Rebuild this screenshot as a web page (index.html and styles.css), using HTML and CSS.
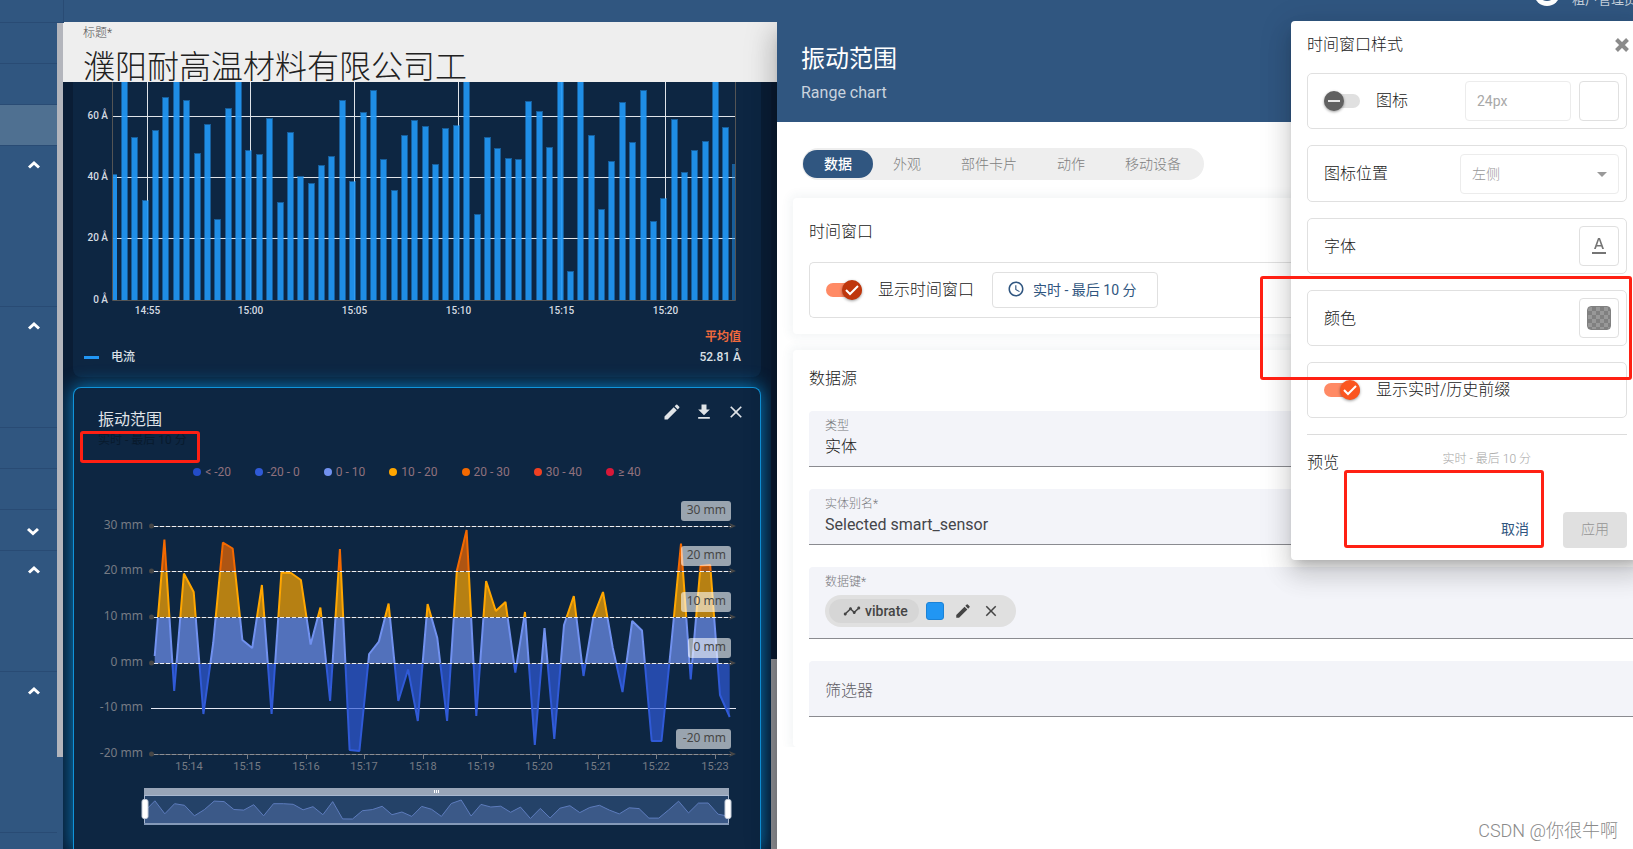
FILE: index.html
```html
<!DOCTYPE html>
<html lang="zh-CN">
<head>
<meta charset="utf-8">
<title>振动范围</title>
<link rel="stylesheet" href="styles.css">
</head>
<body>
<div class="app">
  <header class="topbar">
    <div class="topbar-logo"></div>
    <div class="user">
      <svg class="user-icon" width="26" height="26" viewBox="0 0 26 26"><circle cx="13" cy="13" r="13" fill="#fff"/><circle cx="13" cy="9" r="4" fill="#305680"/><path d="M6 18c2-4 12-4 14 0-4 4-10 4-14 0z" fill="#305680"/></svg>
      <span>租户管理员</span>
    </div>
  </header>

  <div class="body">
    <nav class="sidebar" aria-label="菜单">
      <ul class="menu">
        <li class="menu-item"></li>
        <li class="menu-item"></li>
        <li class="menu-item active"></li>
        <li class="menu-item rows-4"><svg class="chevron" viewBox="0 0 14 10"><path d="M2 7.500L7 3l5 4.500"/></svg></li>
        <li class="menu-item rows-3"><svg class="chevron" viewBox="0 0 14 10"><path d="M2 7.500L7 3l5 4.500"/></svg></li>
        <li class="menu-item"></li>
        <li class="menu-item"></li>
        <li class="menu-item open"><svg class="chevron" viewBox="0 0 14 10"><path d="M2 3l5 4.500L12 3"/></svg></li>
        <li class="menu-item rows-3"><svg class="chevron" viewBox="0 0 14 10"><path d="M2 7.500L7 3l5 4.500"/></svg></li>
        <li class="menu-item rows-4"><svg class="chevron" viewBox="0 0 14 10"><path d="M2 7.500L7 3l5 4.500"/></svg></li>
      </ul>
      <div class="menu-scroll"></div>
    </nav>

    <main class="board">
      <div class="board-title">
        <label for="title">标题*</label>
        <input id="title" class="title-input" type="text" value="濮阳耐高温材料有限公司工">
      </div>
      <div class="widgets">
        <section class="widget current">
          <svg id="bars" class="chart" viewBox="73 82 688 243"></svg>
          <div class="summary">
            <span class="series"><i class="series-key"></i>电流</span>
            <span class="average"><b>平均值</b><span>52.81 Å</span></span>
          </div>
        </section>
        <section class="widget range">
          <div class="range-head">
            <div>
              <h2>振动范围</h2>
              <p class="window-text">实时 - 最后 10 分</p>
            </div>
            <div class="tools">
              <button type="button" aria-label="编辑"><svg width="24" height="24" viewBox="0 0 24 24"><path fill="currentColor" d="M3 17.250V21h3.750L17.810 9.940l-3.750-3.750L3 17.250zM20.710 7.040a1 1 0 0 0 0-1.410l-2.340-2.340a1 1 0 0 0-1.410 0l-1.830 1.830 3.750 3.750 1.830-1.830z"/></svg></button>
              <button type="button" aria-label="下载"><svg width="24" height="24" viewBox="0 0 24 24"><path fill="currentColor" d="M19 9h-4V3H9v6H5l7 7 7-7zM5 18v2h14v-2H5z"/></svg></button>
              <button type="button" aria-label="关闭"><svg width="24" height="24" viewBox="0 0 24 24"><path fill="currentColor" d="M19 6.410L17.590 5 12 10.590 6.410 5 5 6.410 10.590 12 5 17.590 6.410 19 12 13.410 17.590 19 19 17.590 13.410 12z"/></svg></button>
            </div>
            <div class="mark mark-window"></div>
          </div>
          <ul class="legend">
            <li><i class="dot c1"></i>&lt; -20</li>
            <li><i class="dot c2"></i>-20 - 0</li>
            <li><i class="dot c3"></i>0 - 10</li>
            <li><i class="dot c4"></i>10 - 20</li>
            <li><i class="dot c5"></i>20 - 30</li>
            <li><i class="dot c6"></i>30 - 40</li>
            <li><i class="dot c7"></i>≥ 40</li>
          </ul>
          <svg id="range" class="chart" viewBox="74 482 686 367"></svg>
        </section>
      </div>
      <div class="board-scroll"><div class="board-thumb"></div></div>
    </main>

    <section class="editor">
      <header class="editor-head">
        <h1>振动范围</h1>
        <p>Range chart</p>
      </header>
      <div class="editor-body">
        <div class="tabs" role="tablist">
          <button type="button" role="tab" class="tab selected" aria-selected="true">数据</button>
          <button type="button" role="tab" class="tab">外观</button>
          <button type="button" role="tab" class="tab">部件卡片</button>
          <button type="button" role="tab" class="tab">动作</button>
          <button type="button" role="tab" class="tab">移动设备</button>
        </div>

        <section class="panel">
          <h2>时间窗口</h2>
          <div class="option">
            <label class="switch-label"><input type="checkbox" class="switch deep" checked>显示时间窗口</label>
            <button type="button" class="window-button"><svg width="18" height="18" viewBox="0 0 24 24"><path fill="currentColor" d="M11.990 2C6.470 2 2 6.480 2 12s4.470 10 9.990 10C17.520 22 22 17.520 22 12S17.520 2 11.990 2zM12 20a8 8 0 1 1 0-16 8 8 0 0 1 0 16zM12.500 7H11v6l5.250 3.150.750-1.230-4.500-2.670z"/></svg>实时 - 最后 10 分</button>
          </div>
        </section>

        <section class="panel sources">
          <h2>数据源</h2>
          <div class="fields">
            <div class="field"><label for="type">类型</label><input id="type" type="text" value="实体"></div>
            <div class="field"><label for="alias">实体别名*</label><input id="alias" type="text" class="latin" value="Selected smart_sensor"></div>
            <div class="field keys">
              <span class="field-label">数据键*</span>
              <div class="chip">
                <span class="chip-name"><svg width="18" height="18" viewBox="0 0 24 24"><path fill="currentColor" d="M23 8c0 1.100-.900 2-2 2a1.700 1.700 0 0 1-.510-.070l-3.560 3.550c.050.160.070.340.070.520 0 1.100-.900 2-2 2s-2-.900-2-2c0-.180.020-.360.070-.520l-2.550-2.550c-.160.050-.340.070-.520.070s-.360-.020-.520-.070l-4.550 4.560c.050.160.070.330.070.510 0 1.100-.900 2-2 2s-2-.900-2-2 .900-2 2-2c.180 0 .350.020.510.070l4.560-4.550C8.020 9.360 8 9.180 8 9c0-1.100.900-2 2-2s2 .900 2 2c0 .180-.020.360-.070.520l2.550 2.550c.160-.050.340-.070.520-.070s.360.020.520.070l3.550-3.560A1.700 1.700 0 0 1 19 8c0-1.100.900-2 2-2s2 .900 2 2z"/></svg>vibrate</span>
                <button type="button" class="swatch" aria-label="颜色"></button>
                <button type="button" class="chip-button" aria-label="编辑"><svg width="18" height="18" viewBox="0 0 24 24"><path fill="currentColor" d="M3 17.250V21h3.750L17.810 9.940l-3.750-3.750L3 17.250zM20.710 7.040a1 1 0 0 0 0-1.410l-2.340-2.340a1 1 0 0 0-1.410 0l-1.830 1.830 3.750 3.750 1.830-1.830z"/></svg></button>
                <button type="button" class="chip-button" aria-label="移除"><svg width="18" height="18" viewBox="0 0 24 24"><path fill="currentColor" d="M19 6.410L17.590 5 12 10.590 6.410 5 5 6.410 10.590 12 5 17.590 6.410 19 12 13.410 17.590 19 19 17.590 13.410 12z"/></svg></button>
              </div>
            </div>
            <div class="field"><input type="text" aria-label="筛选器" placeholder="筛选器"></div>
          </div>
        </section>
      </div>
    </section>
  </div>

  <aside class="popover">
    <div class="popover-head">
      <h2>时间窗口样式</h2>
      <button type="button" aria-label="关闭"><svg width="16" height="16" viewBox="0 0 16 16"><path d="M2.500 2.500l11 11M13.500 2.500l-11 11" stroke="currentColor" stroke-width="4"/></svg></button>
    </div>
    <div class="row">
      <label class="switch-label"><input type="checkbox" class="switch">图标</label>
      <span class="row-controls">
        <input type="text" class="size-input" value="24px" aria-label="图标大小" disabled>
        <button type="button" class="square" aria-label="图标颜色"></button>
      </span>
    </div>
    <div class="row tall">
      <label for="position">图标位置</label>
      <span class="select-box"><select id="position" disabled><option>左侧</option></select></span>
    </div>
    <div class="row">
      <span>字体</span>
      <button type="button" class="square" aria-label="字体"><svg width="24" height="24" viewBox="0 0 24 24"><path fill="currentColor" fill-rule="evenodd" d="M5 18v2h14v-2H5zM11 4L7 15h1.800l.900-2.600h4.600l.900 2.600H17L13 4h-2zm-.800 7L12 5.800l1.800 5.200h-3.600z"/></svg></button>
    </div>
    <div class="row">
      <span>颜色</span>
      <button type="button" class="square" aria-label="颜色"><span class="checker"></span></button>
    </div>
    <div class="row">
      <label class="switch-label"><input type="checkbox" class="switch" checked>显示实时/历史前缀</label>
    </div>
    <hr>
    <div class="preview">
      <span>预览</span>
      <span class="preview-text">实时 - 最后 10 分</span>
    </div>
    <div class="actions">
      <button type="button" class="cancel">取消</button>
      <button type="button" class="apply" disabled>应用</button>
    </div>
    <div class="mark mark-color"></div>
    <div class="mark mark-preview"></div>
  </aside>
  <div class="credit">CSDN @你很牛啊</div>
</div>
<script src="charts.js"></script>
</body>
</html>
```

FILE: styles.css
```css
* { box-sizing: border-box; }
body, h1, h2, p, ul { margin: 0; padding: 0; font-weight: 400; }
ul { list-style: none; }
body, button, input, select {
  font-family: Roboto, "Noto Sans CJK SC", sans-serif;
  font-weight: 300;
}
button { padding: 0; border: 0; background: none; color: inherit; font-size: 14px; display: inline-flex; align-items: center; justify-content: center; }
svg { display: block; flex: none; }
h2 { font-size: 16px; line-height: 24px; font-weight: 300; }

.app { position: relative; height: 100vh; display: flex; flex-direction: column; overflow: hidden; background: #fff; color: #212121; font-size: 16px; line-height: 24px; }

.topbar { position: relative; z-index: 3; height: 22px; flex: none; background: #305680; }
.topbar-logo { width: 64px; height: 23px; border: solid #294b74; border-width: 0 1px 1px 0; background: #305680; }
.user { position: absolute; top: -20px; right: -4px; display: flex; gap: 12px; color: #c5d0dc; font-size: 13px; line-height: 40px; font-weight: 400; white-space: nowrap; }

.body { flex: 1; min-height: 0; display: grid; grid-template-columns: 63px minmax(0, 714fr) minmax(0, 856fr); }

.sidebar { display: flex; background: #305680; overflow: hidden; }
.menu { flex: 1; padding-top: 1px; }
.menu-item { height: 41px; border-bottom: 1px solid #294b74; padding: 14px 16px 0 0; display: flex; justify-content: flex-end; }
.menu-item.active { background: #4f7091; }
.menu-item.open { padding: 16px 17px 0 0; }
.menu-item.rows-3 { height: 121px; }
.menu-item.rows-4 { height: 161px; }
.chevron { width: 14px; height: 10px; fill: none; stroke: #fff; stroke-width: 3; }
.menu-scroll { width: 6px; height: 734px; margin-top: 1px; background: #b3b5bc; }

.board { position: relative; display: flex; flex-direction: column; background: #0a1d35; overflow: hidden; }
.board-title { height: 60px; flex: none; padding: 1px 20px 0; background: #eee; display: flex; flex-direction: column; align-items: flex-start; overflow: hidden; }
.board-title label { font-size: 12px; line-height: 20px; color: #555; }
.title-input { width: 100%; height: 39px; padding: 3px 0 0; border: 0; background: none; color: #212121; font-size: 32px; line-height: 36px; }
.widgets { flex: 1; min-height: 0; display: flex; flex-direction: column; gap: 10px; padding: 0 16px 0 10px; overflow: hidden; }
.widget { background: #0d2642; }
.chart { width: 100%; font-family: Roboto, sans-serif; font-weight: 400; }
.current { flex: none; height: 295px; border-radius: 0 0 8px 8px; }
.summary { display: flex; justify-content: space-between; align-items: flex-end; padding: 2px 20px 0 11px; color: #dbe0e6; font-size: 12px; line-height: 20px; font-weight: 500; }
.series { display: flex; align-items: center; gap: 12px; }
.series-key { width: 15px; height: 3px; background: #2196f3; }
.average { display: flex; flex-direction: column; align-items: flex-end; }
.average b { color: #f0693c; font-weight: 700; }
.range { position: relative; flex: 1 0 auto; border: 1px solid #1094da; border-bottom: 0; border-radius: 8px 8px 0 0; box-shadow: 0 0 18px 1px #0879b8; }
.range-head { position: relative; height: 74px; padding: 12px 14px 0 24px; display: flex; justify-content: space-between; }
.range-head h2 { color: #e0e4e8; font-weight: 400; line-height: 40px; height: 30px; }
.window-text { color: #081a2d; font-size: 12px; line-height: 20px; font-weight: 400; }
.tools { display: flex; color: #e0e4e8; height: 24px; gap: 12px; }
.tools button { width: 20px; height: 24px; }
.tools svg { width: 20px; height: 20px; }
.legend { display: flex; justify-content: center; gap: 24px; height: 20px; color: #90717d; font-size: 12px; line-height: 20px; font-weight: 400; }
.legend li { display: flex; align-items: center; gap: 4px; }
.dot { width: 8px; height: 8px; border-radius: 50%; }
.c1 { background: #234cc7; }
.c2 { background: #305ad7; }
.c3 { background: #7191ef; }
.c4 { background: #ffa600; }
.c5 { background: #f36900; }
.c6 { background: #f04022; }
.c7 { background: #d81838; }
.board-scroll { position: absolute; z-index: 1; top: 60px; right: 0; bottom: 0; width: 6px; background: #0a1a30; display: flex; align-items: flex-end; }
.board-thumb { width: 6px; height: 190px; background: #8f9095; }

.mark { position: absolute; border: 3px solid #ff2013; border-radius: 3px; pointer-events: none; }
.mark-window { left: 6px; top: 43px; width: 120px; height: 32px; }
.mark-color { left: -31px; top: 255px; width: 372px; height: 104px; }
.mark-preview { left: 53px; top: 449px; width: 200px; height: 78px; }

.editor { position: relative; z-index: 2; background: #fff; box-shadow: 0 8px 10px -5px rgba(0, 0, 0, .2), 0 16px 24px 2px rgba(0, 0, 0, .14), 0 6px 30px 5px rgba(0, 0, 0, .12); }
.editor-head { height: 100px; padding: 21px 24px 0; background: #305680; color: #fff; }
.editor-head h1 { font-size: 24px; line-height: 32px; font-weight: 400; }
.editor-head p { margin-top: 6px; font-size: 16px; line-height: 24px; color: #c9d3de; }
.editor-body { padding: 26px 0 0 16px; display: flex; flex-direction: column; gap: 16px; overflow: hidden; }
.tabs { align-self: flex-start; margin: 0 0 2px 9px; padding: 2px 3px 2px 1px; display: flex; background: #eee; border-radius: 16px; }
.tab { height: 28px; padding: 0 20px 3px; border-radius: 14px; color: #808080; }
.tab.selected { padding: 0 21px 3px; background: #305680; color: #fff; font-weight: 500; }
.panel { padding: 22px 0 16px 16px; border-radius: 4px 0 0 4px; background: #fff; box-shadow: 0 0 10px 4px rgba(40, 80, 90, .05); }
.option { margin-top: 18px; height: 56px; padding-left: 16px; display: flex; align-items: center; gap: 18px; border: 1px solid #e0e0e0; border-right: 0; border-radius: 5px 0 0 5px; }
.switch-label { display: flex; align-items: center; gap: 16px; }
.switch { appearance: none; position: relative; width: 36px; height: 20px; margin: 0; }
.switch::before { content: ""; position: absolute; left: 0; top: 3px; width: 36px; height: 14px; border-radius: 7px; background: #e0e0e0; }
.switch::after { content: ""; position: absolute; left: 0; top: 0; width: 20px; height: 20px; border-radius: 50%; background: linear-gradient(#e8e8e8, #e8e8e8) center / 12px 2px no-repeat #616161; box-shadow: 0 1px 3px rgba(0, 0, 0, .4); }
.switch:checked::before { background: #ff8a65; }
.switch:checked::after { left: 16px; background: url("data:image/svg+xml,%3Csvg xmlns='http://www.w3.org/2000/svg' viewBox='0 0 20 20'%3E%3Cpath d='M4 10l4 4 8-8' fill='none' stroke='white' stroke-width='2'/%3E%3C/svg%3E") center / 20px 20px #fb5620; }
.switch.deep:checked::after { background-color: #bf360c; }
.window-button { min-width: 166px; height: 36px; gap: 8px; padding: 0 15px 2px 14px; justify-content: flex-start; border: 1px solid #e0e0e0; border-radius: 4px; color: #305680; font-weight: 400; }
.sources { padding: 17px 0 30px 16px; }
.fields { margin-top: 20px; display: flex; flex-direction: column; gap: 22px; }
.field { height: 56px; padding: 5px 0 0 16px; display: flex; flex-direction: column; background: #f3f4f9; border-bottom: 1px solid #8a8b90; border-radius: 4px 0 0 0; }
.field label, .field-label { font-size: 12px; line-height: 20px; color: #77787c; }
.field input { height: 22px; padding: 0; border: 0; background: none; font-size: 16px; line-height: 22px; color: #212121; outline: 0; }
.field input.latin { font-weight: 400; color: #44454a; }
.field input:only-child { height: 48px; }
.field input::placeholder { color: #5f6065; opacity: 1; }
.keys { height: 72px; }
.chip { align-self: flex-start; margin-top: 3px; height: 32px; padding: 0 9px 0 4px; display: flex; align-items: center; border-radius: 16px; background: #e0e0e0; color: #444; }
.chip-name { height: 24px; padding: 0 11px 1px 14px; display: flex; align-items: center; gap: 4px; border-radius: 12px; background: #d6d6d6; font-size: 14px; font-weight: 500; }
.swatch { width: 18px; height: 18px; margin: 0 7px; border: 1px solid #1b82d6; border-radius: 3px; background: #2196f3; }
.chip-button { width: 24px; height: 24px; margin-right: 4px; }
.chip svg { width: 18px; height: 18px; }

.popover { position: absolute; z-index: 4; top: 21px; right: -10px; width: 352px; padding: 12px 16px; display: flex; flex-direction: column; gap: 16px; border-radius: 4px; background: #fff; box-shadow: 0 8px 10px -5px rgba(0, 0, 0, .2), 0 16px 24px 2px rgba(0, 0, 0, .1), 0 6px 30px 5px rgba(0, 0, 0, .1); }
.popover-head { display: flex; justify-content: space-between; align-items: center; height: 24px; color: #212121; }
.popover-head button { width: 16px; height: 16px; color: #8b8b8b; margin-right: -3px; }
.row { height: 56px; padding: 0 7px 0 16px; display: flex; align-items: center; justify-content: space-between; border: 1px solid #e0e0e0; border-radius: 5px; }
.row > span:first-child { padding-top: 2px; }
.row.tall { height: 57px; }
.row-controls { display: flex; gap: 8px; }
.size-input { width: 106px; height: 40px; padding: 0 11px; border: 1px solid #ececec; border-radius: 4px; background: #fff; color: #a8a8a8; font-size: 14px; font-weight: 400; }
.square { width: 40px; height: 40px; border: 1px solid #e0e0e0; border-radius: 4px; color: #757575; }
.select-box { position: relative; width: 159px; height: 40px; }
.select-box select { appearance: none; width: 100%; height: 100%; padding: 0 11px; border: 1px solid #ececec; border-radius: 4px; background: #fff; color: #999; font-size: 14px; opacity: 1; }
.select-box::after { content: ""; position: absolute; right: 12px; top: 18px; border: 5px solid transparent; border-top-color: #999; border-bottom: 0; }
.checker { width: 24px; height: 24px; border-radius: 4px; border: 1px solid #808080; background: repeating-conic-gradient(#808080 0 25%, #989898 0 50%) 0 0 / 8px 8px; }
hr { width: 100%; height: 1px; margin: 0; border: 0; background: #dcdcdc; }
.preview { display: flex; align-items: center; height: 24px; }
.preview-text { flex: 1; margin: 0 96px 8px 0; text-align: right; font-size: 12px; line-height: 20px; color: #a5a5a5; }
.actions { margin-top: 21px; display: flex; justify-content: flex-end; gap: 16px; }
.actions button { width: 64px; height: 36px; padding-bottom: 4px; border-radius: 4px; }
.cancel { color: #305680; font-weight: 400; }
.apply { background: #e0e0e0; color: #959595; }

.credit { position: absolute; z-index: 3; right: 15px; bottom: 6px; color: #8a8a8a; font-size: 18px; line-height: 24px; }
```

FILE: charts.js
```javascript
const NS = 'http://www.w3.org/2000/svg';

function add(parent, name, attrs, text) {
  const node = document.createElementNS(NS, name);
  for (const key in attrs) node.setAttribute(key, attrs[key]);
  if (text) node.textContent = text;
  parent.appendChild(node);
  return node;
}

function drawBars() {
  const svg = document.getElementById('bars');
  const tops = [70, 137, 200, 130, 97, 70, 100, 153, 124, 219, 108, 70, 150, 154, 118, 202, 132, 176, 183, 165,
    156, 100, 181, 112, 90, 159, 190, 135, 120, 126, 164, 128, 125, 70, 214, 137, 148, 158, 159, 101,
    111, 147, 70, 271, 70, 135, 209, 161, 102, 142, 90, 221, 198, 119, 172, 150, 141, 70, 127];
  const label = { fill: '#d5dbe2', 'font-size': 10, 'font-weight': 500 };
  [[60, 116], [40, 177], [20, 238], [0, 300]].forEach(([value, y]) => {
    if (value) add(svg, 'path', { d: `M113 ${y + .5}H735`, stroke: '#dfe3e8' });
    add(svg, 'text', { ...label, x: 108, y: y + 3, 'text-anchor': 'end' }, value + ' Å');
  });
  [[147, '14:55'], [250, '15:00'], [354, '15:05'], [458, '15:10'], [561, '15:15'], [665, '15:20']].forEach(([x, time]) => {
    add(svg, 'path', { d: `M${x + .5} 82V300`, stroke: '#dfe3e8' });
    add(svg, 'text', { ...label, x: x + .5, y: 314, 'text-anchor': 'middle' }, time);
  });
  const bar = (x, y, w) => {
    add(svg, 'rect', { x, y, width: w, height: 300 - y, fill: '#2196f3', 'fill-opacity': .5 });
    if (w > 3) add(svg, 'rect', { x: x + (w > 5 ? 1 : 0), y: y + 1, width: w > 5 ? w - 2 : w, height: 299 - y, fill: '#2196f3', 'fill-opacity': .85 });
  };
  bar(113, 174, 4);
  tops.forEach((y, i) => bar(Math.round(121 + i * 10.37), y, 7));
  bar(732, 164, 3);
  add(svg, 'path', { d: 'M112.5 82V300.500H735.500V82', fill: 'none', stroke: '#545454' });
}

function drawRange() {
  const svg = document.getElementById('range');
  const ys = [656, 539.5, 691, 573.5, 592, 714, 643, 542.5, 548.5, 640, 648, 585, 714, 572.5, 573, 580, 644.5, 607.5, 701, 549,
    750, 751, 654, 641.5, 603.5, 701, 669.5, 721, 604, 638, 721, 571, 530, 716, 581, 611, 602, 672.5, 612, 745,
    628, 739, 625, 596, 676, 617, 592, 648, 692, 621, 630.5, 741, 741, 645, 543.5, 679.5, 566, 565, 695, 717];
  const step = 575 / (ys.length - 1);
  const line = 'M' + ys.map((y, i) => `${(154.7 + i * step).toFixed(1)} ${y}`).join('L');
  const bands = [
    [480, 571.5, '#f36900'],
    [571.5, 617.3, '#ffa600'],
    [617.3, 663, '#7191ef'],
    [663, 760, '#305ad7']
  ];
  const defs = add(svg, 'defs', {});
  add(svg, 'path', { d: 'M151 708.500H736', stroke: '#e4e8f4' });
  bands.forEach(([top, bottom, color], i) => {
    const clip = add(defs, 'clipPath', { id: 'band' + i });
    add(clip, 'rect', { x: 150, y: top, width: 590, height: bottom - top });
    const group = add(svg, 'g', { 'clip-path': `url(#band${i})` });
    add(group, 'path', { d: `${line}V663H154.700Z`, fill: color, 'fill-opacity': .7 });
    add(group, 'path', { d: line, fill: 'none', stroke: color, 'stroke-width': 2, 'stroke-linejoin': 'bevel' });
  });

  [[30, 526], [20, 571], [10, 617], [0, 663], [-10, 708], [-20, 754]].forEach(([value, y]) => {
    const font = { 'font-size': 12, 'font-family': '"Noto Sans", sans-serif' };
    add(svg, 'text', { ...font, x: 143, y: y + 3, 'text-anchor': 'end', fill: '#767b84' }, value + ' mm');
    if (value === -10) return;
    add(svg, 'path', { d: `M152 ${y + .5}H732`, stroke: '#625f60' });
    add(svg, 'path', { d: `M154 ${y + .5}H732`, stroke: value === -20 ? '#8b8f96' : '#eceff4', 'stroke-dasharray': '4 2' });
    add(svg, 'circle', { cx: 151.5, cy: y, r: 2.5, fill: '#464646' });
    add(svg, 'path', { d: `M729 ${y - 3}L736 ${y}L729 ${y + 3}L731 ${y}Z`, fill: '#464646' });
    const w = value === 0 ? 43 : value < 0 ? 55 : 50;
    add(svg, 'rect', { x: 731 - w, y: y - 25, width: w, height: 20, rx: 3, fill: '#fff', 'fill-opacity': .58 });
    add(svg, 'text', { ...font, x: 726, y: y - 12, 'text-anchor': 'end', fill: '#464646' }, value + ' mm');
  });

  for (let i = 0; i < 10; i++) {
    const x = Math.round(189 + i * 58.4);
    add(svg, 'path', { d: `M${x + .5} 754V759`, stroke: '#767b84' });
    add(svg, 'text', { x, y: 770, 'text-anchor': 'middle', 'font-size': 11, fill: '#767b84' }, '15:' + (14 + i));
  }

  add(svg, 'rect', { x: 144, y: 788, width: 585, height: 7, fill: '#98a5b8' });
  add(svg, 'rect', { x: 145, y: 795, width: 583, height: 29, fill: '#244268' });
  const mini = ys.map((y, i) => `${(145 + i * 583 / (ys.length - 1)).toFixed(1)} ${(800 + (y - 530) * .086).toFixed(1)}`).join('L');
  add(svg, 'path', { d: `M${mini}V824H145Z`, fill: '#3b5988' });
  add(svg, 'path', { d: `M${mini}`, fill: 'none', stroke: '#5d7cbd' });
  add(svg, 'rect', { x: 144.5, y: 795.5, width: 584, height: 28, fill: 'none', stroke: '#a9b8d0' });
  add(svg, 'path', { d: 'M144 824H729', stroke: '#8499b8', 'stroke-width': 2 });
  add(svg, 'path', { d: 'M434.500 790v3M436.500 790v3M438.500 790v3', stroke: '#fff' });
  [142, 725].forEach(x => add(svg, 'rect', { x, y: 799.5, width: 6, height: 19, rx: 2, fill: '#fff', stroke: '#c3cbd8' }));
}

drawBars();
drawRange();
```
